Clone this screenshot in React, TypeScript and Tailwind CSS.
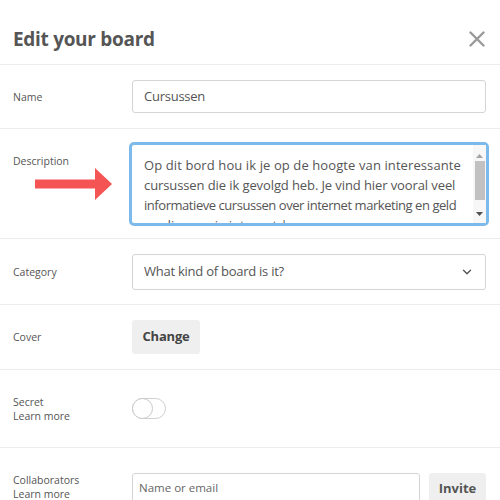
import { ChevronDown } from "lucide-react";

function Row({ label, sub, className, children }: { label: string; sub?: string; className: string; children?: React.ReactNode }) {
  return (
    <div className={`flex border-b border-[#ececec] ${className}`}>
      <div className="w-[132px] shrink-0 pl-[13px] text-[10.5px] leading-[14px] text-[#555]">
        <div>{label}</div>
        {sub && <div>{sub}</div>}
      </div>
      <div className="flex-1 pr-[14px]">{children}</div>
    </div>
  );
}

export default function App() {
  return (
    <div className="relative w-[500px] h-[500px] overflow-hidden bg-white text-[#555]" style={{ fontFamily: '"Open Sans", "Noto Sans", sans-serif' }}>
      <div className="flex h-[65px] items-center justify-between border-b border-[#ececec] pl-[13px] pr-[15px] pt-[14px]">
        <h1 className="text-[19px] font-bold text-[#555] tracking-[-0.3px]">Edit your board</h1>
        <svg width="16" height="16" viewBox="0 0 16 16">
          <path d="M1.5 1.5 L14.5 14.5 M14.5 1.5 L1.5 14.5" stroke="#9a9a9a" strokeWidth="2.4" strokeLinecap="round" />
        </svg>
      </div>

      <Row label="Name" className="h-[64px] items-center">
        <div className="flex h-[33px] items-center rounded-[3px] border border-[#d4d4d4] px-[11px] text-[13px] tracking-[-0.25px] text-[#555]">
          Cursussen
        </div>
      </Row>

      <Row label="Description" className="h-[110px] pt-[25px]">
        <div className="-ml-[3px] -mr-[3px] -mt-[12px] flex h-[84px] rounded-[5px] border-[3px] border-[#7eb9ec] bg-white">
          <div className="flex-1 overflow-hidden whitespace-nowrap pl-[12px] pt-[10px] text-[13px] leading-[20px] text-[#555]">
            <div className="tracking-[0.1px]">Op dit bord hou ik je op de hoogte van interessante</div>
            <div className="tracking-[-0.1px]">cursussen die ik gevolgd heb. Je vind hier vooral veel</div>
            <div className="tracking-[-0.45px]">informatieve cursussen over internet marketing en geld</div>
            <div>verdienen via internet.|</div>
          </div>
          <div className="flex w-[13px] flex-col items-center bg-[#f7f7f7] py-[2px]">
            <svg width="7" height="5" viewBox="0 0 7 5" className="mt-[6px]"><path d="M0 5 L3.5 1 L7 5Z" fill="#a3a3a3" /></svg>
            <div className="mt-[3px] h-[39px] w-[10px] bg-[#c1c1c1]" />
            <div className="flex-1" />
            <svg width="7" height="5" viewBox="0 0 7 5" className="mb-[4px]"><path d="M0 0 L3.5 4 L7 0Z" fill="#505050" /></svg>
          </div>
        </div>
      </Row>

      <Row label="Category" className="h-[66px] items-center">
        <div className="flex h-[36px] items-center justify-between rounded-[3px] border border-[#d4d4d4] pl-[11px] pr-[11px] text-[13px] tracking-[-0.25px] text-[#555]">
          <span>What kind of board is it?</span>
          <ChevronDown size={14} strokeWidth={2.4} color="#555" />
        </div>
      </Row>

      <Row label="Cover" className="h-[65px] items-center">
        <button className="h-[34px] w-[68px] rounded-[3px] bg-[#efefef] text-[13px] font-bold tracking-[-0.2px] text-[#444]">Change</button>
      </Row>

      <Row label="Secret" sub="Learn more" className="h-[78px] items-center">
        <div className="relative h-[21px] w-[34px] rounded-full border border-[#cfcfcf] bg-white">
          <div className="absolute left-[-1px] top-[-1px] h-[21px] w-[21px] rounded-full border border-[#c8c8c8] bg-white" />
        </div>
      </Row>

      <div className="flex pt-[25px]">
        <div className="w-[132px] shrink-0 pl-[13px] text-[10.5px] leading-[14px] text-[#555]">
          <div>Collaborators</div>
          <div>Learn more</div>
        </div>
        <div className="flex flex-1 gap-[9px] pr-[14px]">
          <div className="flex h-[30px] w-[288px] items-center rounded-[3px] border border-[#d4d4d4] px-[6px] text-[11.5px] text-[#666]">
            Name or email
          </div>
          <button className="h-[32px] flex-1 rounded-[3px] bg-[#efefef] text-[13px] font-bold text-[#555]">Invite</button>
        </div>
      </div>

      <svg width="80" height="34" viewBox="0 0 80 34" className="pointer-events-none absolute left-[34px] top-[167px]">
        <path d="M1 12.5 H61 V1 L78 17 L61 33 V21.5 H1 Z" fill="#f45454" />
      </svg>
    </div>
  );
}
